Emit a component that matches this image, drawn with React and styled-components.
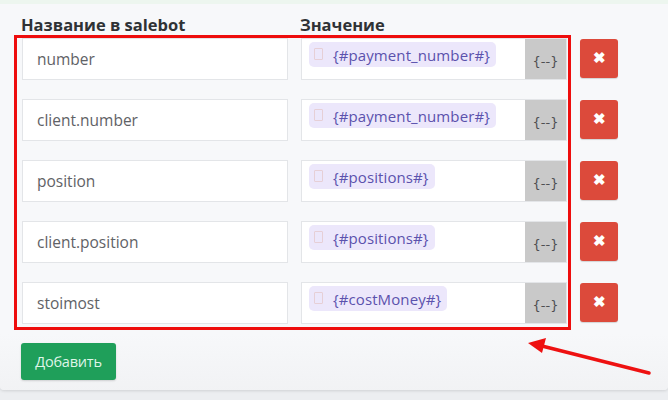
import React from 'react'
import styled, { createGlobalStyle } from 'styled-components'

const GlobalStyle = createGlobalStyle`
  html, body {
    margin: 0;
    padding: 0;
    background: #eceef1;
    font-family: "Open Sans", "Liberation Sans", sans-serif;
  }
`

const Page = styled.div`
  position: relative;
  width: 668px;
  height: 400px;
  overflow: hidden;
  background: #eceef1;
`

const Card = styled.div`
  height: 390px;
  box-sizing: border-box;
  padding: 0 0 0 21px;
  background: linear-gradient(#f7f8fa 0, #f7f8fa 330px, #f1f2f4 390px);
  border-top: 4px solid #edf6ef;
  box-shadow: 0 1px 3px rgba(0, 0, 0, 0.12);
  border-radius: 0 0 4px 4px;
`

const Grid = styled.div`
  display: grid;
  grid-template-columns: 266px 266px 38px;
  column-gap: 13px;
  align-items: center;
`

const HeadRow = styled(Grid)`
  height: 31px;
  align-items: end;
  padding-bottom: 3px;
`

const HeadCell = styled.div`
  font-size: 16.5px;
  font-weight: 700;
  color: #2f3235;
  line-height: 20px;
`

const Rows = styled.div`
  display: flex;
  flex-direction: column;
  gap: 19px;
  padding-left: 1px;
`

const Row = styled(Grid)`
  height: 42px;
`

const Input = styled.div`
  height: 42px;
  box-sizing: border-box;
  background: #fff;
  border: 1px solid #e3e5e8;
  display: flex;
  align-items: center;
  padding-left: 14px;
  font-size: 15.5px;
  color: #5f6266;
`

const Field = styled.div`
  height: 42px;
  box-sizing: border-box;
  background: #fff;
  border: 1px solid #e3e5e8;
  display: flex;
  align-items: stretch;
`

const FieldBody = styled.div`
  flex: 1;
  padding: 3px 0 0 7px;
`

const Chip = styled.span`
  display: inline-flex;
  align-items: center;
  height: 25px;
  padding: 0 6px 0 5px;
  border-radius: 5px;
  background: #ece7fb;
  color: #5b52ad;
  font-size: 15px;
  letter-spacing: 0.1px;
  gap: 10px;
`

const Box = styled.span`
  width: 7px;
  height: 10px;
  border: 1px solid #e6cfd6;
  border-radius: 1px;
  margin-top: -2px;
`

const Addon = styled.div`
  width: 41px;
  background: #c9c9c9;
  color: #4e4f52;
  font-family: "DejaVu Sans", sans-serif;
  font-size: 13px;
  display: flex;
  align-items: center;
  justify-content: center;
  padding-top: 4px;
  box-sizing: border-box;
`

const DeleteBtn = styled.button`
  width: 38px;
  height: 39px;
  margin-top: -2px;
  border: none;
  border-radius: 3px;
  background: #dc4a3b;
  color: #fff;
  font-size: 15px;
  font-weight: 700;
  display: flex;
  align-items: center;
  justify-content: center;
  padding: 0;
  box-shadow: 0 1px 1px rgba(0, 0, 0, 0.15);
`

const AddBtn = styled.button`
  margin-top: 19px;
  width: 95px;
  height: 37px;
  border: none;
  border-radius: 3px;
  background: #1f9f5a;
  color: #dff5e8;
  font-family: "Open Sans", sans-serif;
  font-size: 14.5px;
  letter-spacing: -0.2px;
  box-shadow: 0 1px 2px rgba(0, 0, 0, 0.15);
`

const Highlight = styled.div`
  position: absolute;
  left: 14px;
  top: 35px;
  width: 557px;
  height: 295px;
  box-sizing: border-box;
  border: 3px solid #ee0d0d;
  pointer-events: none;
`

const Arrow = styled.svg`
  position: absolute;
  left: 520px;
  top: 332px;
`

const rows = [
  ['number', '{#payment_number#}'],
  ['client.number', '{#payment_number#}'],
  ['position', '{#positions#}'],
  ['client.position', '{#positions#}'],
  ['stoimost', '{#costMoney#}'],
]

export default function App() {
  return (
    <Page>
      <GlobalStyle />
      <Card>
        <HeadRow>
          <HeadCell>Название в salebot</HeadCell>
          <HeadCell>Значение</HeadCell>
        </HeadRow>
        <Rows>
          {rows.map(([name, value], i) => (
            <Row key={i}>
              <Input>{name}</Input>
              <Field>
                <FieldBody>
                  <Chip>
                    <Box />
                    {value}
                  </Chip>
                </FieldBody>
                <Addon>{'{--}'}</Addon>
              </Field>
              <DeleteBtn>✖</DeleteBtn>
            </Row>
          ))}
        </Rows>
        <AddBtn>Добавить</AddBtn>
      </Card>
      <Highlight />
      <Arrow width="140" height="50" viewBox="0 0 140 50">
        <line x1="129" y1="41" x2="18" y2="13" stroke="#ee1111" strokeWidth="3.5" strokeLinecap="round" />
        <polygon points="8,11 26,6 22,21" fill="#ee1111" />
      </Arrow>
    </Page>
  )
}
